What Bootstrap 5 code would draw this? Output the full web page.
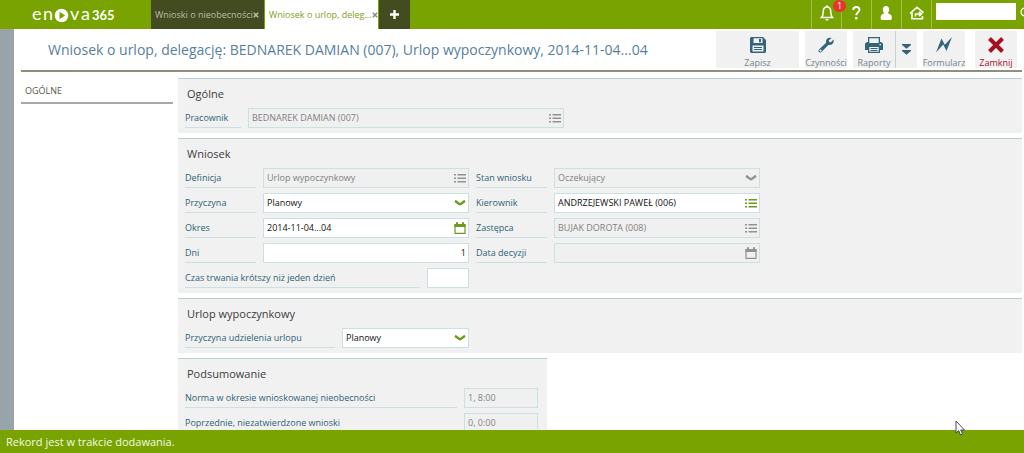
<!DOCTYPE html>
<html lang="pl">
<head>
<meta charset="utf-8">
<meta name="viewport" content="width=device-width, initial-scale=1">
<title>enova365 – Wniosek o urlop</title>
<link href="https://cdn.jsdelivr.net/npm/bootstrap@5.3.0/dist/css/bootstrap.min.css" rel="stylesheet">
<style>
:root { --green:#78a300; --dark:#434c20; --teal:#2d6276; --panel:#f1f1f1; --rule:#cbe0e3; --edge:#b9cdd3; }
body { font-family:"Open Sans","Noto Sans",sans-serif; font-size:9px; line-height:16px; color:#333; }
button { border:0; background:none; padding:0; color:inherit; }
svg { display:block; flex:none; }
.topbar { background:var(--green); height:29px; }
.brand { width:151px; padding-left:31px; padding-bottom:2px; }
.tab { width:113px; margin-right:1px; padding:0 5px 0 4px; background:var(--dark); color:#b9bea6; }
.tab.current { background:#fff; color:#7fa01c; }
.tab a { color:inherit; }
.tab button { color:#b5b8aa; }
.tab.current button { color:#8b8b8b; }
.plus { width:31px; background:var(--dark); color:#fff; }
.cell { width:30px; color:#fff; border-left:1px solid #a3bf55; padding-bottom:3px; }
.count { right:-5px; top:0; width:13px; height:12px; line-height:12px; border-radius:6px; background:#e5352c; z-index:2; }
.finder { width:80px; height:17px; border:0; margin:3px 4px 0; background:#fff; }
.strip { width:14px; background:#98a4a9; }
.work { margin:0 2px 0 7px; }
.headline { height:43px; border-bottom:2px solid #8f8f80; }
.headline h1 { font-size:14px; line-height:20px; color:#57809b; padding-left:27px; }
.tools { gap:6px; padding:2px 5px 2px 0; }
.tool { width:42px; background:var(--panel); color:#71868f; padding-top:6px; }
.tool svg { color:#34647c; }
.tool span { line-height:12px; }
.tool.wide { width:83px; }
.tool.slim { width:22px; padding-top:0; border-left:1px solid #c9d0d3; }
.tool.close-form, .tool.close-form svg { color:#a5121f; }
.columns { gap:5px; padding-top:6px; }
.side { width:152px; }
.side a { color:#555a48; padding:5px 4px 3px; border-bottom:2px solid #a4a9a9; }
.stack { gap:5px; }
.panel { background:var(--panel); border-top:1px solid var(--edge); padding:0 7px 5px; }
.panel h2 { font-size:11px; line-height:29px; color:#3c3c3c; padding-left:2px; }
.line { gap:7px; }
.line > label { width:71px; height:20px; line-height:20px; color:var(--teal); border-bottom:1px solid var(--rule); }
.line > label.l-xs { width:56px; } .line > label.l-md { width:150px; }
.line > label.l-lg { width:235px; } .line > label.l-xl { width:272px; }
.box { width:206px; height:20px; background:#fff; border:1px solid var(--rule); color:#111; padding:0 2px 0 3px; }
.box input, .box select { border:0; background:transparent; padding:0; min-width:0; color:inherit; appearance:none; outline:0; opacity:1; line-height:18px; height:18px; }
.box svg { color:#6d9a1e; pointer-events:none; }
.box.off { background:#f0f0f0; color:#808080; }
.box.off svg { color:#929292; }
.w-xl { width:316px; } .w-xs { width:42px; } .w-md { width:127px; } .w-sm { width:74px; }
.summary { width:369px; }
.status { background:var(--green); color:#f5fae4; height:23px; font-size:11px; padding-left:6px; }
.pointer { left:955px; top:420px; }
</style>
</head>
<body class="vh-100 d-flex flex-column overflow-hidden">
<svg class="d-none">
  <symbol id="list" viewBox="0 0 12 10"><path fill="currentColor" d="M0 1h2v1.5H0zM3.500 1H12v1.500H3.500zM0 4.500h2V6H0zM3.500 4.500H12V6H3.500zM0 8h2v1.500H0zM3.500 8H12v1.500H3.500z"/></symbol>
  <symbol id="down" viewBox="0 0 12 8"><path d="M1 1.800C3.500 3.200 4.800 5.200 6 5.200S8.500 3.200 11 1.800" fill="none" stroke="currentColor" stroke-width="2.500"/></symbol>
  <symbol id="date" viewBox="0 0 12 12"><path d="M1 3h10v8.300H1z" fill="none" stroke="currentColor" stroke-width="1.200"/><path fill="currentColor" d="M.4 2h11.200v3H.4zM2 .2h2V3H2zM8 .2h2V3H8z"/></symbol>
  <symbol id="x" viewBox="0 0 6 6"><path d="M.8.8l4.400 4.400M5.200.8L.8 5.200" stroke="currentColor" stroke-width="1.600"/></symbol>
</svg>

<header class="topbar d-flex flex-shrink-0">
  <a href="#" class="brand d-flex align-items-center" aria-label="enova365">
    <svg width="86" height="22" viewBox="0 0 86 22"><g fill="#fff" font-family="Lato,sans-serif"><text x="1" y="17" font-size="18">e</text><text x="12" y="17" font-size="18">n</text><text x="39" y="17" font-size="18">v</text><text x="50" y="17" font-size="18">a</text><text x="61" y="17" font-size="13" font-weight="700">365</text></g><circle cx="30.500" cy="12.500" r="6.800" fill="#fff"/><path d="M28.500 8.800v7.400l5.600-3.700z" fill="#78a300"/></svg>
  </a>
  <nav class="d-flex" aria-label="Karty">
    <div class="tab d-flex align-items-center justify-content-between"><a href="#" class="text-decoration-none text-nowrap">Wnioski o nieobecności</a><button type="button" aria-label="Zamknij kartę"><svg width="6" height="6"><use href="#x"/></svg></button></div>
    <div class="tab current d-flex align-items-center justify-content-between"><a href="#" class="text-decoration-none text-nowrap">Wniosek o urlop, deleg...</a><button type="button" aria-label="Zamknij kartę"><svg width="6" height="6"><use href="#x"/></svg></button></div>
    <button type="button" class="plus d-flex align-items-center justify-content-center" aria-label="Nowa karta"><svg width="9" height="9" viewBox="0 0 9 9"><path d="M4.500 0v9M0 4.500h9" stroke="currentColor" stroke-width="2.400"/></svg></button>
  </nav>
  <div class="d-flex ms-auto">
    <button type="button" class="cell position-relative d-flex align-items-center justify-content-center" aria-label="Powiadomienia"><svg width="14" height="16" viewBox="0 0 14 16"><path d="M1.500 12.500c1.500-1.500 1.700-3 1.700-5.500 0-3 1.600-5 3.800-5s3.800 2 3.800 5c0 2.500.2 4 1.700 5.500z" fill="none" stroke="currentColor" stroke-width="1.500"/><path d="M5 14h4l-2 2zM6 .5h2V2H6z" fill="currentColor"/></svg><span class="count position-absolute text-center">1</span></button>
    <button type="button" class="cell d-flex align-items-center justify-content-center" aria-label="Pomoc"><svg width="9" height="14" viewBox="0 0 9 14"><path d="M1.200 3.800C1.500 0 7.600.3 7.500 3.800 7.400 6.300 4.300 6.300 4.300 9.200" fill="none" stroke="currentColor" stroke-width="2"/><path d="M3.200 11h2.300v2.400H3.200z" fill="currentColor"/></svg></button>
    <button type="button" class="cell d-flex align-items-center justify-content-center" aria-label="Użytkownik"><svg width="13" height="14" viewBox="0 0 13 14"><path fill="currentColor" d="M6 0c2 0 3.200 1.300 3.200 3.300 0 1.500-.6 3-1.500 4 1.800.8 3.700 1.500 4 3 .2 1.500.1 3.700-.6 3.700H1.400C.7 14 .600 11.800.8 10.300c.3-1.500 1.700-2.200 3.500-3-.9-1-1.500-2.500-1.500-4C2.800 1.300 4 0 6 0z"/></svg></button>
    <button type="button" class="cell d-flex align-items-center justify-content-center" aria-label="Wyloguj"><svg width="16" height="14" viewBox="0 0 16 14"><path d="M1 7.500L8 1.200l6.500 5.600M3 6.500V12.700h10.500V10M6.500 10.500V8H12M10 5.800L12.500 8 10 10.200" fill="none" stroke="currentColor" stroke-width="1.600"/></svg></button>
    <div class="cell w-auto d-flex align-items-start p-0"><input type="search" class="finder" aria-label="Szukaj">
      <svg width="4" height="20" viewBox="0 0 4 20"><circle cx="5" cy="12" r="4" fill="none" stroke="currentColor" stroke-width="1.300"/></svg></div>
  </div>
</header>

<div class="d-flex flex-grow-1 overflow-hidden">
  <div class="strip flex-shrink-0"></div>
  <main class="work flex-grow-1 overflow-hidden">
    <div class="headline d-flex">
      <h1 class="m-0 flex-grow-1 align-self-center text-nowrap fw-normal">Wniosek o urlop, delegację: BEDNAREK DAMIAN (007), Urlop wypoczynkowy, 2014-11-04...04</h1>
      <div class="tools d-flex flex-shrink-0" role="toolbar" aria-label="Akcje">
        <button type="button" class="tool wide d-flex flex-column align-items-center"><svg width="16" height="16" viewBox="0 0 16 16"><path fill="currentColor" fill-rule="evenodd" d="M0 1l1-1h12l3 3v12l-1 1H1l-1-1zM3.500 1.300V6h9V1.300zM9 2h2v3.200H9zM2.500 8.500v6h11v-6zM4 10h8v1H4zM4 12h8v1H4z"/></svg><span class="mt-1">Zapisz</span></button>
        <button type="button" class="tool d-flex flex-column align-items-center"><svg width="16" height="16" viewBox="0 0 16 16"><path fill="currentColor" fill-rule="evenodd" d="M13.500 1L10.800 3.500l.4 1.500 1.600.3L15.500 2.600C16.500 6 14 8.700 10.300 7.900L3.500 14.900C1.700 16.600-.6 14.300 1 12.500L8.100 5.700C7.400 2.300 10 0 13.500 1zM2.500 12.500a1 1 0 1 0 .1 0z"/></svg><span class="mt-1">Czynności</span></button>
        <div class="d-flex">
          <button type="button" class="tool d-flex flex-column align-items-center"><svg width="18" height="16" viewBox="0 0 18 16"><path fill="currentColor" fill-rule="evenodd" d="M3 0h12v5h1l2 1.500V13h-3v3H3v-3H0V6.500L2 5h1zM4.300 1.300V6h9.400V1.300zM4.300 10v4.700h9.400V10zM5.500 11h7v1h-7zM5.500 13h7v1h-7zM14.500 7v1.200H16V7z"/></svg><span class="mt-1">Raporty</span></button>
          <button type="button" class="tool slim d-flex align-items-center justify-content-center" aria-label="Więcej raportów"><svg width="9" height="11" viewBox="0 0 9 11"><path fill="currentColor" d="M0 0h9v1L4.500 4.800 0 1zM0 6h9v1l-4.500 3.800L0 7z"/></svg></button>
        </div>
        <button type="button" class="tool d-flex flex-column align-items-center"><svg width="16" height="16" viewBox="0 0 16 16"><path fill="currentColor" d="M0 15.500L5.500 1.500 8.800 7.800 16 0 10.500 14 7.200 7.500z"/></svg><span class="mt-1">Formularz</span></button>
        <button type="button" class="tool close-form ms-1 d-flex flex-column align-items-center"><svg width="16" height="16" viewBox="0 0 16 16"><path d="M1.500 1.500l13 13M14.500 1.500l-13 13" stroke="currentColor" stroke-width="4"/></svg><span class="mt-1">Zamknij</span></button>
      </div>
    </div>
    <div class="columns d-flex">
      <nav class="side flex-shrink-0" aria-label="Sekcje"><a href="#" class="d-block text-decoration-none">OGÓLNE</a></nav>
      <form class="stack flex-grow-1 d-flex flex-column">
        <section class="panel">
          <h2 class="m-0 fw-normal">Ogólne</h2>
          <div class="line d-flex"><label class="l-xs" for="prac">Pracownik</label><div class="box off w-xl d-flex align-items-center"><input id="prac" class="flex-grow-1" value="BEDNAREK DAMIAN (007)" readonly><svg width="12" height="10"><use href="#list"/></svg></div></div>
        </section>
        <section class="panel">
          <h2 class="m-0 fw-normal">Wniosek</h2>
          <div class="stack d-flex flex-column">
            <div class="line d-flex"><label for="def">Definicja</label><div class="box off d-flex align-items-center"><input id="def" class="flex-grow-1" value="Urlop wypoczynkowy" readonly><svg width="12" height="10"><use href="#list"/></svg></div>
              <label for="stan">Stan wniosku</label><div class="box off d-flex align-items-center"><select id="stan" class="flex-grow-1" disabled><option>Oczekujący</option></select><svg width="12" height="8"><use href="#down"/></svg></div></div>
            <div class="line d-flex"><label for="przy">Przyczyna</label><div class="box d-flex align-items-center"><select id="przy" class="flex-grow-1"><option>Planowy</option></select><svg width="12" height="8"><use href="#down"/></svg></div>
              <label for="kier">Kierownik</label><div class="box d-flex align-items-center"><input id="kier" class="flex-grow-1" value="ANDRZEJEWSKI PAWEŁ (006)"><svg width="12" height="10"><use href="#list"/></svg></div></div>
            <div class="line d-flex"><label for="okres">Okres</label><div class="box d-flex align-items-center"><input id="okres" class="flex-grow-1" value="2014-11-04...04"><svg width="12" height="12"><use href="#date"/></svg></div>
              <label for="zast">Zastępca</label><div class="box off d-flex align-items-center"><input id="zast" class="flex-grow-1" value="BUJAK DOROTA (008)" readonly><svg width="12" height="10"><use href="#list"/></svg></div></div>
            <div class="line d-flex"><label for="dni">Dni</label><div class="box d-flex align-items-center"><input id="dni" class="flex-grow-1 text-end" value="1"></div>
              <label for="dec">Data decyzji</label><div class="box off d-flex align-items-center"><input id="dec" class="flex-grow-1" readonly><svg width="12" height="12"><use href="#date"/></svg></div></div>
            <div class="line d-flex"><label class="l-lg" for="czas">Czas trwania krótszy niż jeden dzień</label><div class="box w-xs d-flex"><input id="czas" class="flex-grow-1"></div></div>
          </div>
        </section>
        <section class="panel">
          <h2 class="m-0 fw-normal">Urlop wypoczynkowy</h2>
          <div class="line d-flex"><label class="l-md" for="udz">Przyczyna udzielenia urlopu</label><div class="box w-md d-flex align-items-center"><select id="udz" class="flex-grow-1"><option>Planowy</option></select><svg width="12" height="8"><use href="#down"/></svg></div></div>
        </section>
        <section class="panel summary">
          <h2 class="m-0 fw-normal">Podsumowanie</h2>
          <div class="stack d-flex flex-column">
            <div class="line d-flex"><label class="l-xl" for="norma">Norma w okresie wnioskowanej nieobecności</label><div class="box off w-sm d-flex"><input id="norma" class="flex-grow-1" value="1, 8:00" readonly></div></div>
            <div class="line d-flex"><label class="l-xl" for="pop">Poprzednie, niezatwierdzone wnioski</label><div class="box off w-sm d-flex"><input id="pop" class="flex-grow-1" value="0, 0:00" readonly></div></div>
          </div>
        </section>
      </form>
    </div>
  </main>
</div>

<footer class="status d-flex align-items-center flex-shrink-0">Rekord jest w trakcie dodawania.</footer>
<svg class="pointer position-fixed" width="11" height="16" viewBox="0 0 11 16"><path d="M1 1v12l2.700-2.500L5.500 15l2-1-1.800-4H9.500z" fill="#fff" stroke="#4b4763"/></svg>
<script src="https://cdn.jsdelivr.net/npm/bootstrap@5.3.0/dist/js/bootstrap.bundle.min.js"></script>
</body>
</html>
